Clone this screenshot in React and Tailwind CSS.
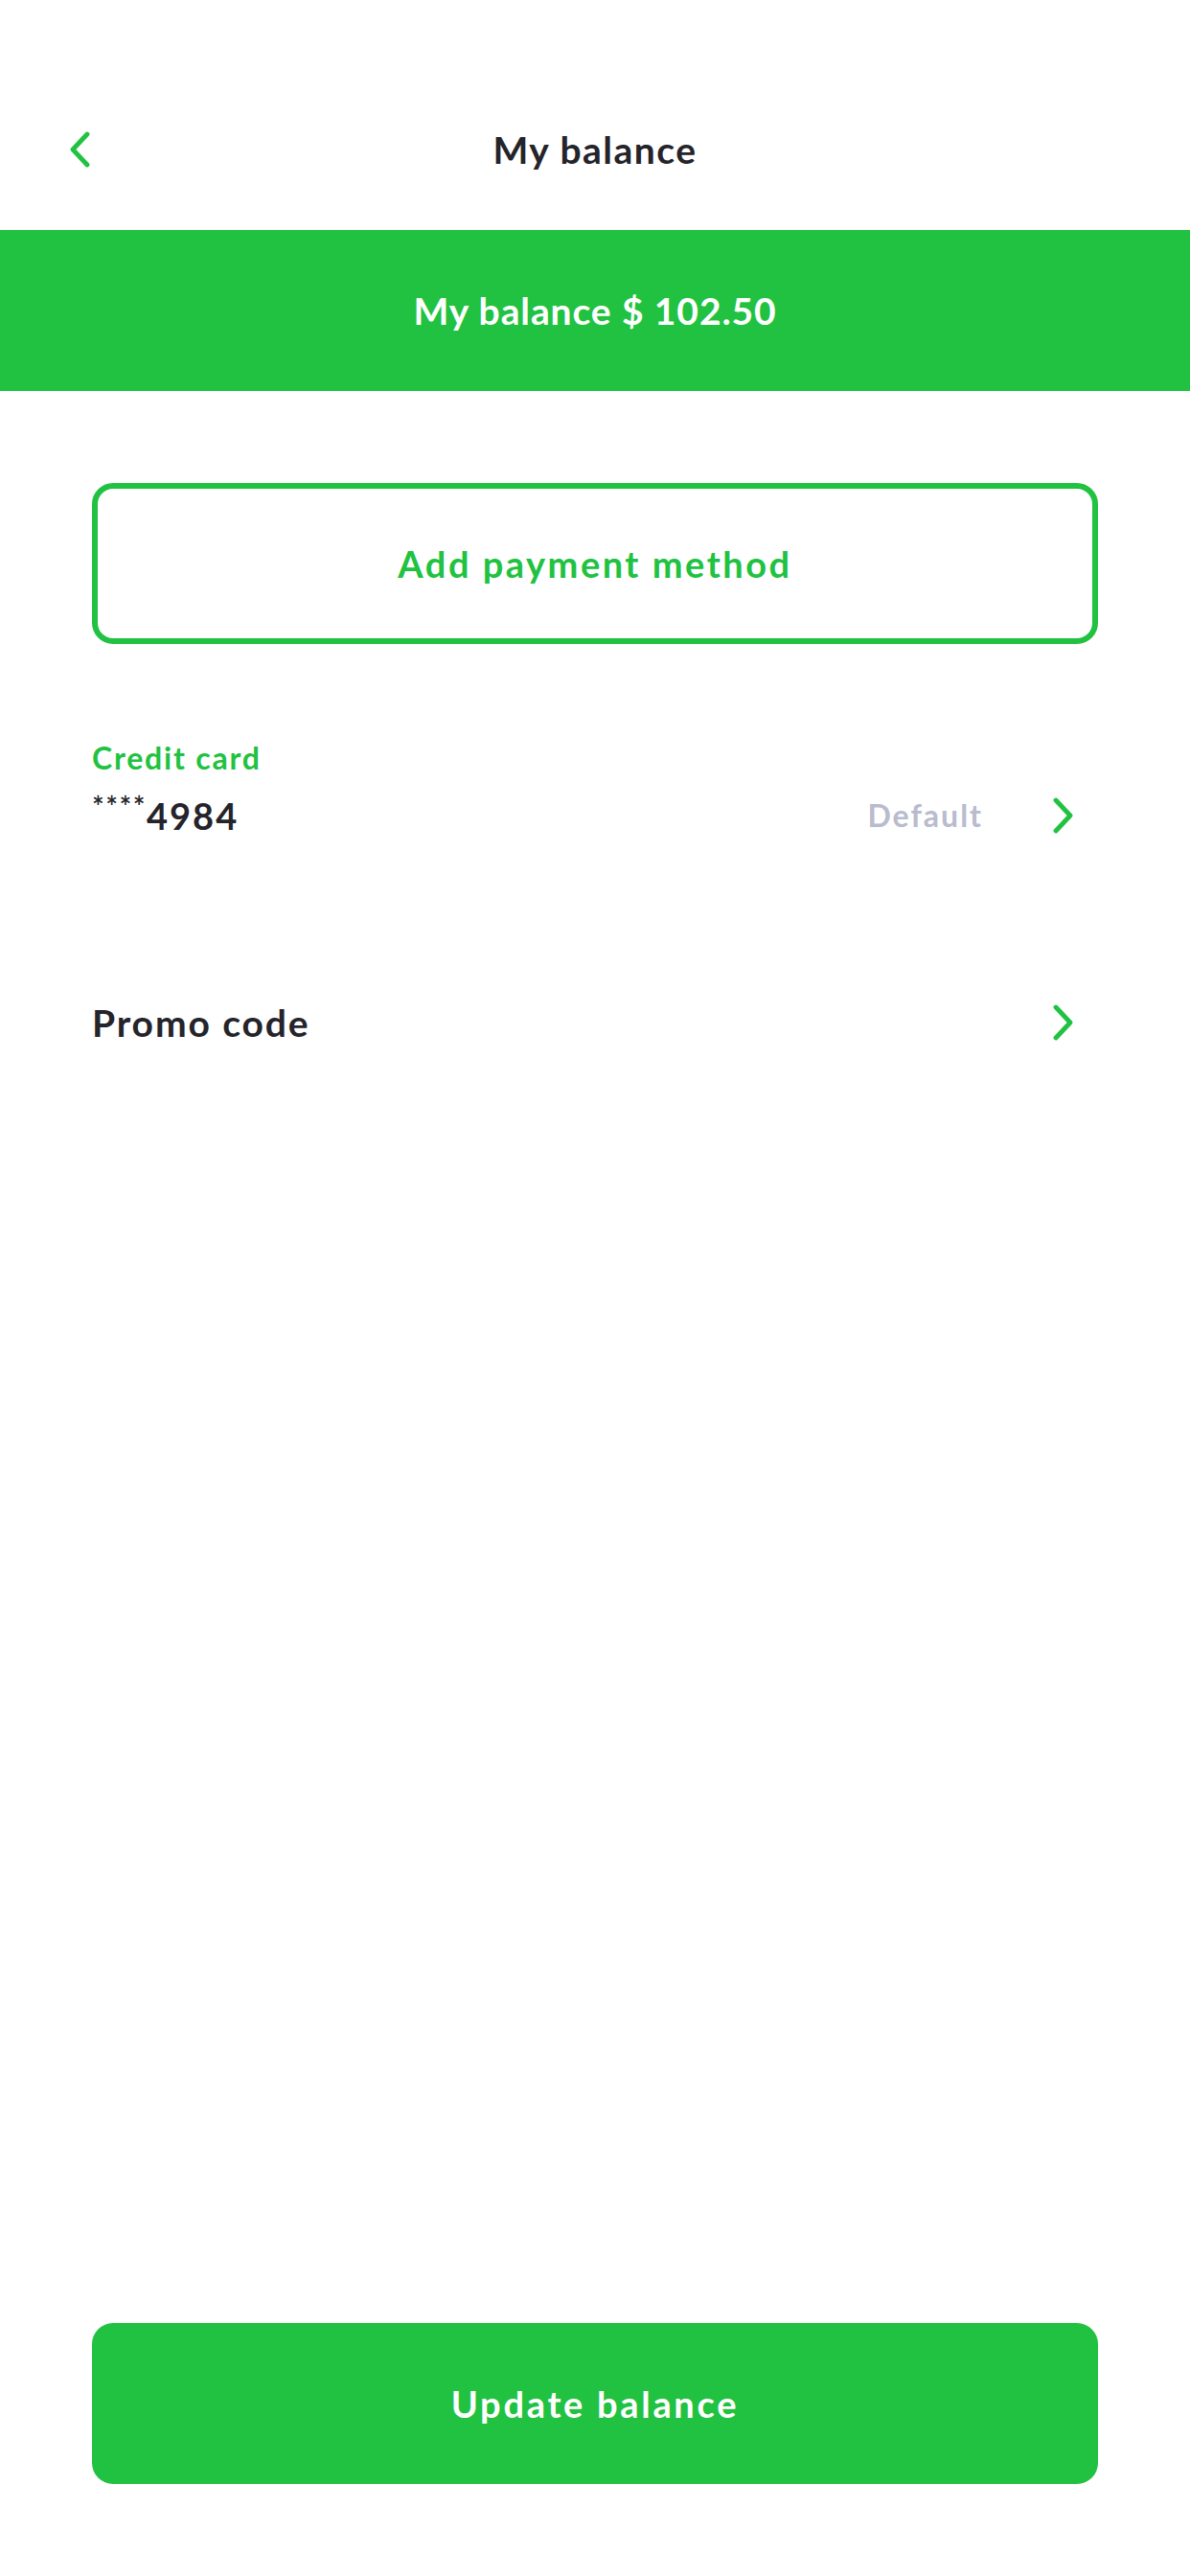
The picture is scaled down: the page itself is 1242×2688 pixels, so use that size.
import React from "react";

const font = { fontFamily: '"Lato", "Noto Sans", sans-serif' };

function ChevronLeft() {
  return (
    <svg width="24" height="38" viewBox="0 0 24 38" fill="none">
      <path d="M20 3 L5 19 L20 35" stroke="#21C241" strokeWidth="4.8" strokeLinecap="round" strokeLinejoin="round" />
    </svg>
  );
}

function ChevronRight() {
  return (
    <svg width="24" height="38" viewBox="0 0 24 38" fill="none">
      <path d="M4 3 L19 19 L4 35" stroke="#21C241" strokeWidth="4.8" strokeLinecap="round" strokeLinejoin="round" />
    </svg>
  );
}

export default function App() {
  return (
    <div className="h-screen w-full bg-white flex flex-col" style={font}>
      <div className="pt-[118px] pb-[46px]">
        <div className="grid grid-cols-[1fr_auto_1fr] items-center h-[76px] px-[71px]">
          <div className="flex items-center">
            <ChevronLeft />
          </div>
          <div className="text-[39px] font-bold text-[#24242a] tracking-[1.5px]">My balance</div>
          <div />
        </div>
      </div>

      <div className="h-[168px] bg-[#21C241] flex items-center justify-center">
        <span className="text-white text-[39px] font-bold tracking-[0.9px]">My balance $ 102.50</span>
      </div>

      <div className="px-[96px] flex-1 flex flex-col">
        <button className="mt-[96px] h-[168px] w-full border-[6px] border-[#21C241] rounded-[22px] flex items-center justify-center text-[#21C241] text-[38px] font-bold tracking-[2.5px]">
          Add payment method
        </button>

        <div className="mt-[99px] text-[#21C241] text-[32px] font-bold leading-[40px] tracking-[1.8px]">Credit card</div>
        <div className="mt-[18px] h-[44px] flex items-center">
          <div className="flex-1 text-[#24242a] font-bold text-[38px] flex items-center">
            <span className="text-[30px] font-semibold self-start mt-[-4px] tracking-[1.5px]">****</span>
            <span className="tracking-[2px]">4984</span>
          </div>
          <span className="text-[#B9BBCE] text-[32px] font-bold mr-[72px] tracking-[2px]">Default</span>
          <div className="mr-[24px] flex items-center">
            <ChevronRight />
          </div>
        </div>

        <div className="mt-[172px] h-[44px] flex items-center">
          <div className="flex-1 text-[#24242a] font-bold text-[39px] tracking-[1.9px]">Promo code</div>
          <div className="mr-[24px] flex items-center">
            <ChevronRight />
          </div>
        </div>

        <div className="mt-auto pb-[96px]">
          <button className="h-[168px] w-full bg-[#21C241] rounded-[22px] flex items-center justify-center text-white text-[38px] font-bold tracking-[2.7px]">
            Update balance
          </button>
        </div>
      </div>
    </div>
  );
}
